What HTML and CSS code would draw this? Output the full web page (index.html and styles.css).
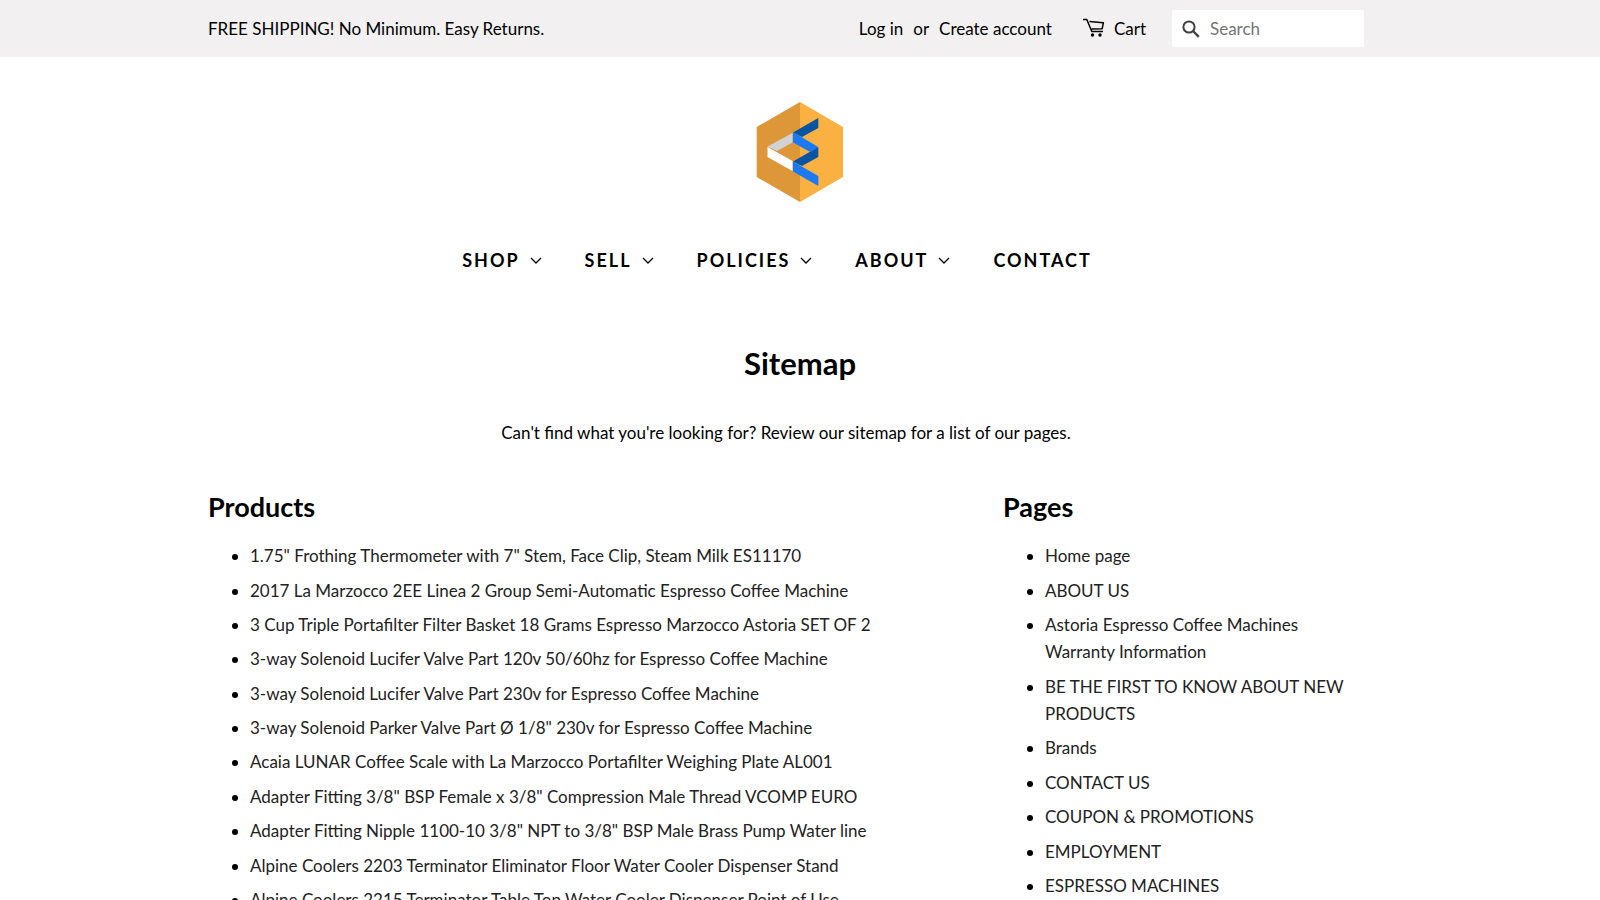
FILE: index.html
```
<!DOCTYPE html>
<html lang="en">
<head>
<meta charset="utf-8">
<meta name="viewport" content="width=device-width, initial-scale=1">
<title>Sitemap</title>
<link rel="stylesheet" href="styles.css">
</head>
<body>
<div class="topbar">
  <div class="wrapper topbar-inner">
    <p class="announcement">FREE SHIPPING! No Minimum. Easy Returns.</p>
    <div class="account">
      <a href="#">Log in</a>
      <span>or</span>
      <a href="#">Create account</a>
    </div>
    <a class="cart" href="#">
      <svg class="cart-icon" viewBox="0 0 24 20" aria-hidden="true">
        <path d="M1 1.500h3.800l5 12h11.200M7.400 3.500l14 1.200-1.200 6-10.600.3" fill="none" stroke="currentColor" stroke-width="1.5" stroke-linejoin="round"/>
        <circle cx="10.500" cy="17" r="1.700"/><circle cx="18" cy="17" r="1.700"/>
      </svg>
      <span>Cart</span>
    </a>
    <form class="search">
      <button class="search-button" type="submit" aria-label="Search">
        <svg class="search-icon" viewBox="0 0 18 18" aria-hidden="true">
          <circle cx="7" cy="7" r="5.600" fill="none" stroke="currentColor" stroke-width="2"/>
          <path d="M11 11l5.800 5.800" stroke="currentColor" stroke-width="2.400"/>
        </svg>
      </button>
      <input class="search-input" type="search" placeholder="Search" aria-label="Search">
    </form>
  </div>
</div>
<header class="wrapper header">
  <a class="logo" href="#" aria-label="Home">
    <svg class="logo-mark" viewBox="0 0 88 102" aria-hidden="true">
      <path d="M44 1L.7 26v50L44 101z" fill="#dd9638"/>
      <path d="M44 1l43 25v50L44 101z" fill="#fbb042"/>
      <path d="M36.500 32v9.500L21 50l-9.500-4.500z" fill="#d1d2d3"/>
      <path d="M11.500 46l25 14v10l-25-14z" fill="#fff"/>
      <path d="M62.300 17v10L46 36l-9-4.500z" fill="#0855a3"/>
      <path d="M62.300 46v10L46 65l-9-4.500z" fill="#0855a3"/>
      <path d="M37 31l25.300 15-8 5L37 41.500z" fill="#1a7af5"/>
      <path d="M37 60.500L62.300 75v10L37 70.500z" fill="#1a7af5"/>
    </svg>
  </a>
  <nav class="nav">
    <a href="#">SHOP <svg class="chevron" viewBox="0 0 12 8"><path d="M1 2l5 5 5-5"/></svg></a>
    <a href="#">SELL <svg class="chevron" viewBox="0 0 12 8"><path d="M1 2l5 5 5-5"/></svg></a>
    <a href="#">POLICIES <svg class="chevron" viewBox="0 0 12 8"><path d="M1 2l5 5 5-5"/></svg></a>
    <a href="#">ABOUT <svg class="chevron" viewBox="0 0 12 8"><path d="M1 2l5 5 5-5"/></svg></a>
    <a href="#">CONTACT</a>
  </nav>
</header>
<main class="wrapper">
  <h1 class="title">Sitemap</h1>
  <p class="intro">Can't find what you're looking for? Review our sitemap for a list of our pages.</p>
  <div class="columns">
    <section>
      <h2 class="heading">Products</h2>
      <ul class="links">
        <li><a href="#">1.75" Frothing Thermometer with 7" Stem, Face Clip, Steam Milk ES11170</a></li>
        <li><a href="#">2017 La Marzocco 2EE Linea 2 Group Semi-Automatic Espresso Coffee Machine</a></li>
        <li><a href="#">3 Cup Triple Portafilter Filter Basket 18 Grams Espresso Marzocco Astoria SET OF 2</a></li>
        <li><a href="#">3-way Solenoid Lucifer Valve Part 120v 50/60hz for Espresso Coffee Machine</a></li>
        <li><a href="#">3-way Solenoid Lucifer Valve Part 230v for Espresso Coffee Machine</a></li>
        <li><a href="#">3-way Solenoid Parker Valve Part Ø 1/8" 230v for Espresso Coffee Machine</a></li>
        <li><a href="#">Acaia LUNAR Coffee Scale with La Marzocco Portafilter Weighing Plate AL001</a></li>
        <li><a href="#">Adapter Fitting 3/8" BSP Female x 3/8" Compression Male Thread VCOMP EURO</a></li>
        <li><a href="#">Adapter Fitting Nipple 1100-10 3/8" NPT to 3/8" BSP Male Brass Pump Water line</a></li>
        <li><a href="#">Alpine Coolers 2203 Terminator Eliminator Floor Water Cooler Dispenser Stand</a></li>
        <li><a href="#">Alpine Coolers 2215 Terminator Table Top Water Cooler Dispenser Point of Use</a></li>
      </ul>
    </section>
    <section>
      <h2 class="heading">Pages</h2>
      <ul class="links">
        <li><a href="#">Home page</a></li>
        <li><a href="#">ABOUT US</a></li>
        <li><a href="#">Astoria Espresso Coffee Machines Warranty Information</a></li>
        <li><a href="#">BE THE FIRST TO KNOW ABOUT NEW PRODUCTS</a></li>
        <li><a href="#">Brands</a></li>
        <li><a href="#">CONTACT US</a></li>
        <li><a href="#">COUPON &amp; PROMOTIONS</a></li>
        <li><a href="#">EMPLOYMENT</a></li>
        <li><a href="#">ESPRESSO MACHINES</a></li>
      </ul>
    </section>
  </div>
</main>
</body>
</html>
```
FILE: styles.css
```
* { box-sizing: border-box; }

body {
  margin: 0;
  background: #fff;
  color: #000;
  font: 17px/1.61 Lato, "Open Sans", sans-serif;
}

a { color: inherit; text-decoration: none; }
h1, h2, p, ul { margin: 0; }

.wrapper {
  max-width: 1244px;
  margin: 0 auto;
  padding: 0 30px;
}

.topbar { background: #f2f0f1; }

.topbar-inner {
  display: flex;
  align-items: center;
  min-height: 57px;
  padding-right: 58px;
}

.announcement { margin-right: auto; }
.account { display: flex; gap: 10px; }

.cart {
  display: flex;
  align-items: center;
  gap: 8px;
  margin: 0 26px 0 30px;
}

.cart-icon { width: 24px; height: 20px; fill: currentColor; }

.search {
  display: flex;
  align-items: center;
  width: 192px;
  height: 37px;
  background: #fff;
  border-radius: 2px;
}

.search-button {
  display: flex;
  padding: 0 10px;
  border: 0;
  background: none;
  color: #404040;
}

.search-icon { width: 18px; height: 18px; }

.search-input {
  flex: 1;
  min-width: 0;
  padding: 0;
  border: 0;
  outline: 0;
  background: none;
  font: inherit;
}

.search-input::placeholder { color: #757575; }

.header { padding-top: 44px; }
.logo { display: block; width: 88px; margin: 0 auto; }
.logo-mark { display: block; width: 88px; height: 102px; }

.nav {
  display: flex;
  justify-content: center;
  gap: 43px;
  padding: 43px 46px 0 0;
  font-size: 18px;
  font-weight: 700;
  letter-spacing: 2px;
}

.nav a { display: flex; align-items: center; gap: 10px; }

.chevron {
  width: 12px;
  height: 8px;
  fill: none;
  stroke: currentColor;
  stroke-width: 1.3;
}

.title {
  padding-top: 66px;
  font-size: 31px;
  line-height: 44px;
  text-align: center;
}

.intro { padding: 34px 28px 0 0; text-align: center; }

.columns {
  display: grid;
  grid-template-columns: 765px 1fr;
  gap: 30px;
  padding: 41px 28px 0 0;
}

.heading { font-size: 27px; line-height: 40px; }

.links { padding: 15px 0 0 42px; }
.links li { margin-bottom: 7px; }
.links a { color: #222; }
```
